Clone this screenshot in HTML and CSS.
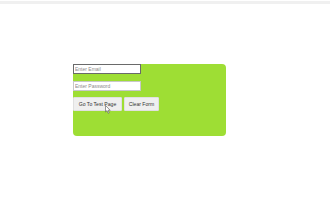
FILE: index.html
```html
<!DOCTYPE html>
<html>
<head>
<meta charset="utf-8">
<link rel="stylesheet" href="styles.css">
</head>
<body>
<div class="topbar"></div>
<div class="page">
  <div class="panel">
    <input class="field field-email" type="text" placeholder="Enter Email">
    <input class="field field-pass" type="password" placeholder="Enter Password">
    <div class="actions">
      <button class="btn btn-go">Go To Test Page</button>
      <button class="btn btn-clear">Clear Form</button>
      <svg class="cursor" width="6" height="9" viewBox="0 0 6 9"><path d="M0.5 0.5 L0.5 7 L2 5.6 L3.2 8.3 L4.2 7.9 L3.1 5.3 L5.2 5.3 Z" fill="#fff" stroke="#555" stroke-width="0.6"/></svg>
    </div>
  </div>
</div>
</body>
</html>
```
FILE: styles.css
```css
html, body {
  margin: 0;
  padding: 0;
  background: #ffffff;
  font-family: "Liberation Sans", Arial, sans-serif;
}
.topbar {
  height: 3px;
  margin-top: 1px;
  background: #f0f0f0;
}
.page {
  padding: 60px 0 0 73px;
}
.panel {
  width: 153px;
  height: 72px;
  background: #9ede34;
  border-radius: 4px;
  display: flex;
  flex-direction: column;
  align-items: flex-start;
  box-sizing: border-box;
}
.field {
  box-sizing: border-box;
  width: 68px;
  height: 9.5px;
  margin: 0;
  padding: 0 1px;
  font-family: "Liberation Sans", Arial, sans-serif;
  font-size: 5px;
  background: #fff;
  border: 1px solid #c8c8c8;
  outline: none;
}
.field::placeholder {
  color: #8a8a8a;
}
.field-email {
  border: 1px solid #6a6a6a;
}
.field-pass {
  margin-top: 7.5px;
}
.actions {
  position: relative;
  display: flex;
  gap: 2px;
  margin-top: 6.5px;
}
.btn {
  box-sizing: border-box;
  height: 14px;
  margin: 0;
  padding: 0;
  white-space: nowrap;
  font-family: "Liberation Sans", Arial, sans-serif;
  font-size: 5.1px;
  color: #333;
  background: #efefef;
  border: 1px solid #e0e0e0;
  border-radius: 1px;
}
.btn-go {
  width: 49px;
}
.btn-clear {
  width: 35px;
}
.cursor {
  position: absolute;
  left: 32px;
  top: 8px;
}
```
